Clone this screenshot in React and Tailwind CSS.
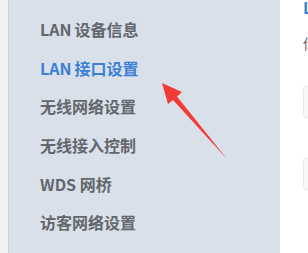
export default function App() {
  const items = [
    "LAN 设备信息",
    "LAN 接口设置",
    "无线网络设置",
    "无线接入控制",
    "WDS 网桥",
    "访客网络设置",
  ];
  const active = 1;

  return (
    <div
      className="relative flex h-[253px] w-[308px] overflow-hidden bg-white"
      style={{ fontFamily: '"Noto Sans CJK SC", "Noto Sans", sans-serif' }}
    >
      <div className="w-[9px] shrink-0 border-r border-[#cdd1d8] bg-[#f2f0f1]" />
      <div className="w-[271px] shrink-0 bg-[#d9e0ea] pt-[10px] pl-[31px]">
        {items.map((label, i) => (
          <div
            key={label}
            className={
              "flex h-[38.6px] items-center text-[16px] leading-none font-semibold whitespace-nowrap " +
              (i === active ? "text-[#3b7fd6]" : "text-[#63676d]")
            }
          >
            {label.startsWith("LAN ") ? (
              <>
                <span className="mr-[3px]">LAN</span>
                {label.slice(3)}
              </>
            ) : (
              label
            )}
          </div>
        ))}
      </div>
      <div className="flex-1 overflow-hidden pl-[23px]">
        <div className="-mt-[5px] text-[16px] font-semibold whitespace-nowrap text-[#3b7fd6]">
          LAN 接口设置
        </div>
        <div className="mt-[14px] text-[14px] whitespace-nowrap text-[#666]">
          你可以在这里设置
        </div>
        <div className="mt-[32px] h-[32px] w-[200px] rounded border border-[#e6e6e6] bg-[#f8f8f8]" />
        <div className="mt-[40px] h-[32px] w-[200px] rounded border border-[#e6e6e6] bg-[#f8f8f8]" />
      </div>
      <svg
        className="pointer-events-none absolute top-0 left-0"
        width="308"
        height="253"
        viewBox="0 0 308 253"
      >
        <polygon
          points="162,83 182,92 177,96.5 227,159 173,100 168,104"
          fill="#f23b35"
        />
      </svg>
    </div>
  );
}
